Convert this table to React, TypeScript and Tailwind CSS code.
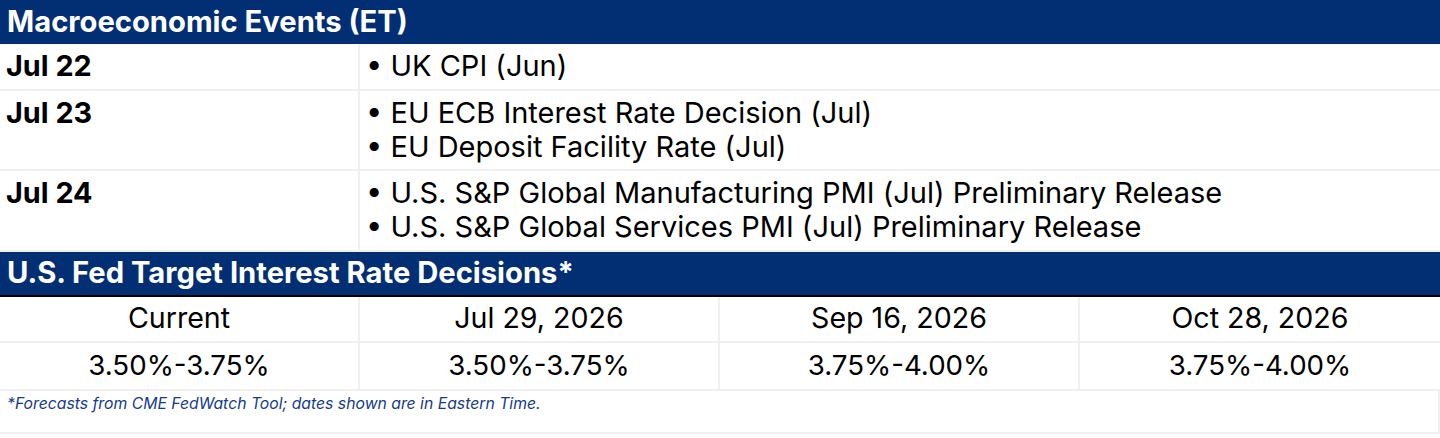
import React from "react";

const events = [
  { date: "Jul 22", items: ["UK CPI (Jun)"], h: "h-[47px]" },
  { date: "Jul 23", items: ["EU ECB Interest Rate Decision (Jul)", "EU Deposit Facility Rate (Jul)"], h: "h-[80px]" },
  {
    date: "Jul 24",
    items: [
      "U.S. S&P Global Manufacturing PMI (Jul) Preliminary Release",
      "U.S. S&P Global Services PMI (Jul) Preliminary Release",
    ],
    h: "h-[81px]",
  },
];

const dates = ["Current", "Jul 29, 2026", "Sep 16, 2026", "Oct 28, 2026"];
const rates = ["3.50%-3.75%", "3.50%-3.75%", "3.75%-4.00%", "3.75%-4.00%"];

export default function App() {
  return (
    <div className="w-[1440px] bg-white text-black" style={{ fontFamily: "Inter, 'Noto Sans', sans-serif" }}>
      <div className="h-[44px] bg-[#022e73] text-white font-bold text-[29.2px] leading-[43px] pl-[7px]">
        Macroeconomic Events (ET)
      </div>
      {events.map((e) => (
        <div key={e.date} className={`flex border-b-2 border-[#f0f0f0] ${e.h}`}>
          <div className="w-[360px] shrink-0 border-r-2 border-[#f0f0f0] pl-[6px] font-bold text-[28.8px] leading-[34px] pt-[5px]">
            {e.date}
          </div>
          <div className="flex-1 pl-[6px] text-[29px] leading-[34px] pt-[5px]">
            {e.items.map((it) => (
              <div key={it}>• {it}</div>
            ))}
          </div>
        </div>
      ))}
      <div className="h-[45px] bg-[#022e73] text-white font-bold text-[29.2px] leading-[41px] pl-[7px] border-b-2 border-black">
        U.S. Fed Target Interest Rate Decisions*
      </div>
      <div className="grid grid-cols-4 border-b-2 border-[#f0f0f0]">
        {dates.map((d, i) => (
          <div key={d} className={`text-center text-[28.6px] h-[44px] leading-[42px] ${i < 3 ? "border-r-2 border-[#f0f0f0]" : ""}`}>
            {d}
          </div>
        ))}
      </div>
      <div className="grid grid-cols-4">
        {rates.map((r, i) => (
          <div key={i} className={`text-center text-[27.7px] h-[46px] leading-[44px] ${i < 3 ? "border-r-2 border-[#f0f0f0]" : ""}`}>
            {r}
          </div>
        ))}
      </div>
      <div className="h-[45px] border-t-2 border-b-2 border-r-2 border-[#f0f0f0] pl-[7px] pt-[1px] italic text-[15.75px] leading-[23px] text-[#153b8c]">
        *Forecasts from CME FedWatch Tool; dates shown are in Eastern Time.
      </div>
    </div>
  );
}
